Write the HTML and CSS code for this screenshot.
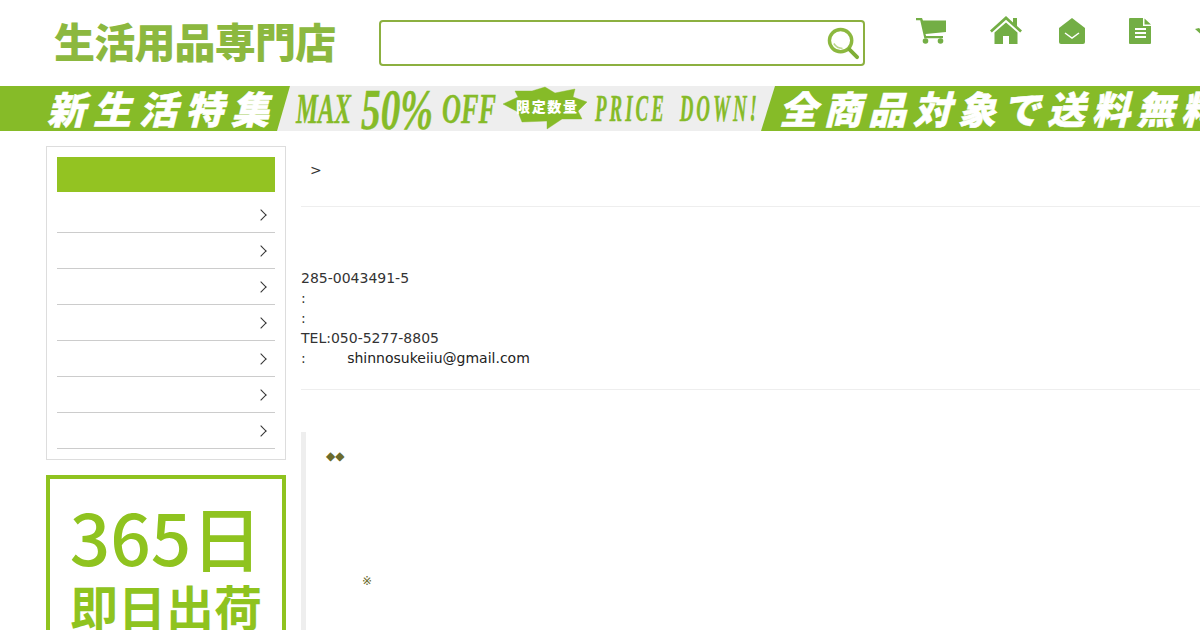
FILE: index.html
```html
<!DOCTYPE html>
<html>
<head>
<title>生活用品専門店</title>
<meta name="viewport" content="width=device-width, initial-scale=1.0">
<link rel="stylesheet" href="styles.css">
</head>
<body>

<header class="top">
  <a class="logo" href="#">生活用品専門店</a>
  <form class="search">
    <input type="text" class="search-input">
    <svg class="search-icon" viewBox="0 0 34 34">
      <circle cx="14" cy="14" r="11.500" fill="none" stroke="#8cb83f" stroke-width="3.500"/>
      <path d="M7 17c2 3 5 5 9 5" fill="none" stroke="#b9d48a" stroke-width="1.500"/>
      <path d="M23 23l8 8" stroke="#7fae35" stroke-width="4" stroke-linecap="round"/>
    </svg>
  </form>
  <nav class="icons">
    <svg class="ico ico-cart" viewBox="0 0 30 28"><path d="M0 1h6l1 2.500h23v11.500L9.500 17l.6 2H27v2.200H8.300L4.200 3.200H0z"/><circle cx="9.500" cy="24" r="2.800"/><circle cx="24.500" cy="24" r="2.800"/></svg>
    <svg class="ico ico-home" viewBox="0 0 32 28"><path d="M16 0L0 14.500l1.800 2L16 3.800 30.200 16.500l1.800-2-5-4.500V2h-4v4.400z"/><path d="M16 6.500L4.500 16.500V28H13v-8h6v8h8.500V16.500z"/></svg>
    <svg class="ico ico-mail" viewBox="0 0 26 26"><path d="M13 0L0 10v14a2 2 0 0 0 2 2h22a2 2 0 0 0 2-2V10z"/><path d="M6 15l7 5 7-5" fill="none" stroke="#fff" stroke-width="1.500"/></svg>
    <svg class="ico ico-doc" viewBox="0 0 22 26"><path d="M1 0h13v8h8v17a1 1 0 0 1-1 1H1a1 1 0 0 1-1-1V1a1 1 0 0 1 1-1z"/><path d="M15.500 0.500L22 6.500h-6.500z"/><path d="M6 11h11M6 15h11M6 19h11" stroke="#fff" stroke-width="2"/></svg>
    <svg class="ico ico-more" viewBox="0 0 26 26"><path d="M0 11l4-1 4 4 5-5 2 2-7 7z"/></svg>
  </nav>
</header>

<svg class="banner" viewBox="0 0 1200 45">
  <rect width="1200" height="45" fill="#86bb28"/>
  <polygon points="290,0 775,0 761,45 277,45" fill="#eeeeee"/>
  <g class="banner-white">
    <text x="47" y="38" font-size="38" textLength="222" lengthAdjust="spacing">新生活特集</text>
    <text x="779" y="38" font-size="38" textLength="440" lengthAdjust="spacing">全商品対象で送料無料</text>
  </g>
  <g class="banner-green">
    <text x="296" y="37" font-size="42" textLength="55" lengthAdjust="spacingAndGlyphs">MAX</text>
    <text x="361" y="43" font-size="56" textLength="72" lengthAdjust="spacingAndGlyphs">50%</text>
    <text x="442" y="37" font-size="42" textLength="54" lengthAdjust="spacingAndGlyphs">OFF</text>
    <polygon points="503,18 518,11 515,5 532,5 545,1 555,7 575,3 573,11 587,16 578,25 582,33 562,33 547,43 547,35 522,36 518,26"/>
    <text class="banner-price" x="595" y="35" font-size="38" textLength="165" lengthAdjust="spacingAndGlyphs">PRICE DOWN!</text>
  </g>
  <text class="banner-badge" x="516" y="26" font-size="14" textLength="61" lengthAdjust="spacing">限定数量</text>
</svg>

<div class="wrap">
  <aside class="side">
    <div class="side-box">
      <div class="side-head"></div>
      <ul class="side-list">
        <li></li>
        <li></li>
        <li></li>
        <li></li>
        <li></li>
        <li></li>
        <li></li>
      </ul>
    </div>
    <div class="promo">
      <div class="promo-big">365日</div>
      <div class="promo-sub">即日出荷</div>
    </div>
  </aside>

  <main class="main">
    <div class="crumb">&gt;</div>
    <div class="address">
      285-0043491-5<br>
      :<br>
      :<br>
      TEL:050-5277-8805<br>
      : <a class="mail" href="#">shinnosukeiiu@gmail.com</a>
    </div>
    <blockquote class="note">
      <p class="note-mark">◆◆</p>
      <p class="note-star">※</p>
    </blockquote>
  </main>
</div>

</body>
</html>
```

FILE: styles.css
```css
html, body {
  height: 630px;
  overflow: hidden;
}
body {
  margin: 0;
  font-family: "DejaVu Sans", sans-serif;
  font-size: 14px;
  color: #333;
  background: #fff;
}

/* header */
.top {
  display: flex;
  height: 86px;
  box-sizing: border-box;
  padding: 20px 0 0 54px;
}
.logo {
  display: block;
  flex: none;
  width: 325px;
  height: 46px;
  font-family: "Noto Sans CJK JP", sans-serif;
  font-weight: 900;
  font-size: 41px;
  letter-spacing: -0.8px;
  line-height: 41px;
  color: #8cb83f;
  text-decoration: none;
}
.search {
  display: flex;
  flex: none;
  align-items: center;
  width: 486px;
  height: 46px;
  box-sizing: border-box;
  border: 2px solid #8cb040;
  border-radius: 4px;
  padding-right: 3px;
}
.search-input {
  flex: 1;
  min-width: 0;
  border: none;
  outline: none;
  background: none;
}
.search-icon {
  width: 33px;
  height: 33px;
  margin-top: 1px;
}
.icons {
  display: flex;
  flex: none;
  align-items: flex-start;
  margin-left: 51px;
  margin-top: -4px;
}
.ico {
  display: block;
  flex: none;
  fill: #73ae45;
}
.ico-cart { width: 30px; height: 28px; margin-right: 44px; margin-top: 1px; }
.ico-home { width: 32px; height: 28px; margin-right: 37px; }
.ico-mail { width: 26px; height: 26px; margin-right: 44px; margin-top: 2px; }
.ico-doc { width: 22px; height: 26px; margin-right: 44px; margin-top: 2px; }
.ico-more { width: 26px; height: 26px; margin-top: 2px; }

/* banner */
.banner {
  display: block;
  width: 1200px;
  height: 45px;
}
.banner text {
  font-style: italic;
}
.banner-white {
  fill: #fff;
  stroke: #fff;
  stroke-width: 0.5;
  font-family: "Noto Sans CJK JP", sans-serif;
  font-weight: 900;
}
.banner-green {
  fill: #86bb28;
  stroke: #86bb28;
  stroke-width: 0.4;
  font-family: "Liberation Serif", serif;
  font-weight: 700;
}
.banner-price {
  letter-spacing: 6px;
  word-spacing: 10px;
}
.banner .banner-badge {
  fill: #fff;
  font-family: "Noto Sans CJK JP", sans-serif;
  font-weight: 900;
  font-style: normal;
}

/* columns */
.wrap {
  display: flex;
  height: 499px;
  box-sizing: border-box;
  overflow: hidden;
  padding: 15px 0 0 46px;
}
.side {
  flex: none;
  width: 240px;
  margin-right: 15px;
}
.side-box {
  height: 314px;
  box-sizing: border-box;
  border: 1px solid #ddd;
  padding: 10px;
}
.side-head {
  height: 35px;
  background: #93c322;
}
.side-list {
  list-style: none;
  margin: 5px 0 0;
  padding: 0;
}
.side-list li {
  position: relative;
  height: 35px;
  border-bottom: 1px solid #ccc;
}
.side-list li::after {
  content: "";
  position: absolute;
  right: 10px;
  top: 14px;
  width: 7px;
  height: 7px;
  border-top: 1px solid #333;
  border-right: 1px solid #333;
  transform: rotate(45deg);
}
.promo {
  height: 200px;
  box-sizing: border-box;
  margin-top: 15px;
  border: 4px solid #8fc31f;
  color: #8fc31f;
  text-align: center;
  font-family: "Noto Sans CJK JP", sans-serif;
}
.promo-big {
  font-size: 71px;
  font-weight: 500;
  line-height: 72px;
  margin-top: 20px;
}
.promo-sub {
  font-size: 48px;
  font-weight: 700;
  line-height: 60px;
  margin-top: 4px;
}

/* main column */
.main {
  flex: 1;
  min-width: 0;
}
.crumb {
  height: 61px;
  box-sizing: border-box;
  padding: 14px 0 0 9px;
  line-height: 20px;
  border-bottom: 1px solid #eee;
}
.address {
  padding: 61px 0 21px;
  line-height: 20px;
  border-bottom: 1px solid #eee;
}
.mail {
  margin-left: 37px;
  color: #222;
  text-decoration: none;
}
.note {
  margin: 42px 0 0;
  height: 300px;
  border-left: 5px solid #eee;
  padding: 0 0 0 20px;
  color: #6b6b2c;
}
.note p {
  margin: 0;
  line-height: 20px;
}
.note-mark {
  padding-top: 14px;
  font-size: 12px;
}
.note .note-star {
  margin-top: 105px;
  padding-left: 36px;
  font-size: 12px;
}
```
